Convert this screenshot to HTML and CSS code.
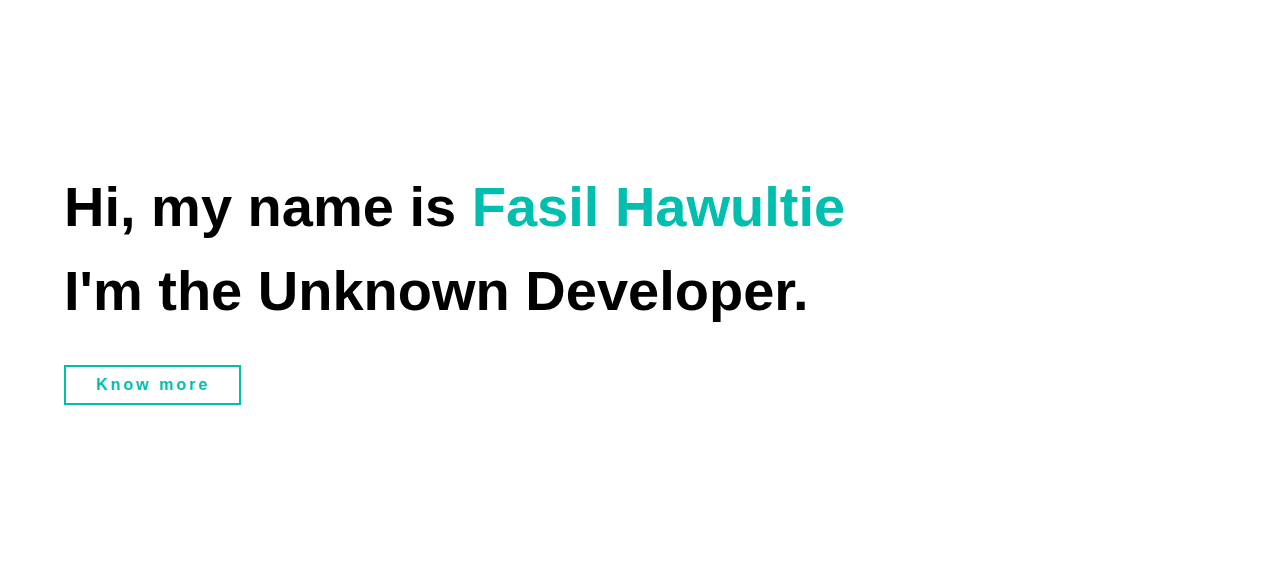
FILE: index.html
```html
<!DOCTYPE html>
<html lang="en">
<head>
<meta charset="utf-8">
<title>Fasil Hawultie</title>
<link rel="stylesheet" href="styles.css">
</head>
<body>
<main>
  <section class="hero">
    <div class="hero-inner">
      <h1 class="hero-title">Hi, my name is <span class="accent">Fasil Hawultie</span><br>I'm the Unknown Developer.</h1>
      <a class="btn" href="#about">Know more</a>
    </div>
  </section>
  <section class="about" id="about"></section>
</main>
</body>
</html>
```

FILE: styles.css
```css
html {
  overflow-y: scroll;
}
html, body {
  margin: 0;
  padding: 0;
  background: #ffffff;
}
body {
  font-family: "Liberation Sans", Arial, sans-serif;
  color: #000;
}
.hero {
  min-height: 100vh;
  display: flex;
  align-items: center;
  padding: 2px 64px 0;
  box-sizing: border-box;
}
.hero-inner {
  display: flex;
  flex-direction: column;
  align-items: flex-start;
  gap: 32px;
}
.hero-title {
  margin: 0;
  font-size: 56px;
  line-height: 84px;
  font-weight: 700;
}
.accent {
  color: #00bfae;
}
.btn {
  display: inline-block;
  border: 2px solid #00bfae;
  color: #00bfae;
  text-decoration: none;
  font-weight: 700;
  font-size: 16px;
  letter-spacing: 3px;
  line-height: 18px;
  padding: 9px 29px 9px 30px;
}
.about {
  height: 1925px;
}
```
